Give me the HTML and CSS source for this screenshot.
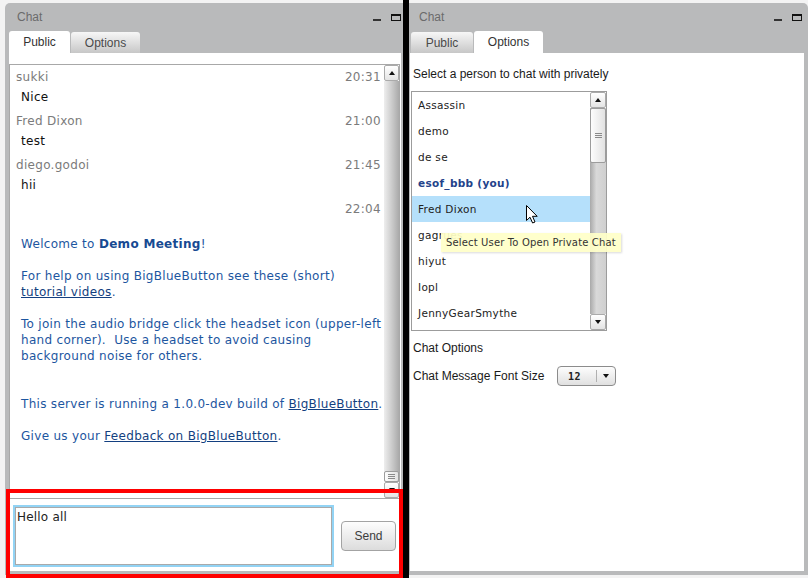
FILE: index.html
```html
<!DOCTYPE html>
<html>
<head>
<meta charset="utf-8">
<link rel="stylesheet" href="styles.css">
</head>
<body>
<div class="screen">
  <section class="win win-left">
    <header class="titlebar">
      <span class="title">Chat</span>
      <span class="ctrls"><i class="ic-min"></i><i class="ic-max"></i></span>
    </header>
    <nav class="tabs">
      <span class="tab active w-public">Public</span>
      <span class="tab w-options">Options</span>
    </nav>
    <div class="body body-left">
      <div class="chatlist">
        <div class="msgs">
          <div class="msg">
            <div class="meta"><span>sukki</span><span>20:31</span></div>
            <div class="text">Nice</div>
          </div>
          <div class="msg">
            <div class="meta"><span>Fred Dixon</span><span>21:00</span></div>
            <div class="text">test</div>
          </div>
          <div class="msg">
            <div class="meta"><span>diego.godoi</span><span>21:45</span></div>
            <div class="text">hii</div>
          </div>
          <div class="msg last">
            <div class="meta"><span></span><span>22:04</span></div>
            <div class="welcome">
              <p>Welcome to <b>Demo Meeting</b>!</p>
              <p>For help on using BigBlueButton see these (short)<br><a>tutorial videos</a>.</p>
              <p class="gap2">To join the audio bridge click the headset icon (upper-left<br>hand corner).&nbsp; Use a headset to avoid causing<br>background noise for others.</p>
              <p>This server is running a 1.0.0-dev build of <a>BigBlueButton</a>.</p>
              <p>Give us your <a>Feedback on BigBlueButton</a>.</p>
            </div>
          </div>
        </div>
        <div class="vscroll">
          <div class="sb-btn"><i class="tri-up"></i></div>
          <div class="sb-track track-left">
            <div class="sb-thumb small"><i class="grip"></i></div>
          </div>
          <div class="sb-btn"><i class="tri-down"></i></div>
        </div>
      </div>
      <div class="compose">
        <div class="input">Hello all</div>
        <button class="send">Send</button>
      </div>
    </div>
  </section>

  <div class="divider"></div>

  <section class="win win-right">
    <header class="titlebar">
      <span class="title">Chat</span>
      <span class="ctrls"><i class="ic-min"></i><i class="ic-max"></i></span>
    </header>
    <nav class="tabs">
      <span class="tab w-public2">Public</span>
      <span class="tab active w-options">Options</span>
    </nav>
    <div class="body body-right">
      <div class="label select-label">Select a person to chat with privately</div>
      <div class="userbox">
        <div class="users">
          <div class="user">Assassin</div>
          <div class="user">demo</div>
          <div class="user">de se</div>
          <div class="user me">esof_bbb (you)</div>
          <div class="user sel">Fred Dixon</div>
          <div class="user">gagrues</div>
          <div class="user">hiyut</div>
          <div class="user">Iopl</div>
          <div class="user">JennyGearSmythe</div>
        </div>
        <div class="vscroll wide">
          <div class="sb-btn"><i class="tri-up"></i></div>
          <div class="sb-track track-right">
            <div class="sb-thumb big"><i class="grip"></i></div>
          </div>
          <div class="sb-btn"><i class="tri-down"></i></div>
        </div>
        <div class="tooltip">Select User To Open Private Chat</div>
        <svg class="cursor" width="13" height="19" viewBox="0 0 13 19">
          <path d="M0.5 0.5 L0.5 15.5 L4 12.2 L6.6 18 L9 17 L6.5 11.3 L11.2 11.3 Z" fill="#fff" stroke="#000" stroke-width="1" stroke-linejoin="miter"/>
        </svg>
      </div>
      <div class="label opt-title">Chat Options</div>
      <div class="opt-row">
        <span class="label opt-label">Chat Message Font Size</span>
        <span class="combo"><span class="val">12</span><span class="arrow"><i class="tri-down"></i></span></span>
      </div>
    </div>
  </section>

  <div class="highlight"></div>
</div>
</body>
</html>
```

FILE: styles.css
```css
* { box-sizing: border-box; }

body {
  margin: 0;
  background: #f3f3f3;
  font-family: "DejaVu Sans", Verdana, sans-serif;
}

.screen {
  position: relative;
  display: flex;
  width: 808px;
  height: 578px;
  overflow: hidden;
}

.win {
  margin-top: 3px;
  height: 572px;
  background: #b9babb;
  display: flex;
  flex-direction: column;
}

.win-left {
  margin-left: 5px;
  width: 398px;
  padding: 0 2px 4px 4px;
  border-radius: 5px 0 0 0;
}

.win-right {
  width: 399px;
  padding: 0 4px 4px 1px;
  border-radius: 0 5px 0 0;
}

.divider {
  width: 6px;
  background: #000;
}

.titlebar {
  height: 28px;
  display: flex;
  align-items: center;
  justify-content: space-between;
  font-family: "Liberation Sans", Arial, sans-serif;
  font-size: 12px;
  color: #6b6b6b;
  padding-left: 8px;
}

.win-right .titlebar {
  padding-left: 9px;
  padding-right: 2px;
}

.ctrls {
  display: flex;
  align-items: flex-end;
  gap: 10px;
  height: 7px;
}

.ic-min {
  width: 8px;
  height: 2px;
  background: #333;
}

.ic-max {
  width: 10px;
  height: 7px;
  border: 1px solid #111;
  border-top-width: 2px;
}

.tabs {
  height: 22px;
  display: flex;
  align-items: flex-end;
  gap: 1px;
}

.win-right .tabs { padding-left: 1px; }

.tab {
  height: 21px;
  display: flex;
  align-items: center;
  justify-content: center;
  font-family: "Liberation Sans", Arial, sans-serif;
  font-size: 12px;
  color: #4a4a4a;
  background: linear-gradient(#f7f7f7, #c7c7c7);
  border-radius: 3px 3px 0 0;
}

.tab.active {
  height: 22px;
  background: #fff;
  color: #333;
}

.w-public { width: 61px; }
.w-public2 { width: 62px; }
.w-options { width: 69px; }

.body {
  flex: 1;
  background: #fff;
  display: flex;
  flex-direction: column;
}

.body-left {
  padding-top: 11px;
  padding-right: 1px;
}

/* chat list */
.chatlist {
  height: 435px;
  border: 1px solid #a8a8a8;
  display: flex;
}

.msgs {
  flex: 1;
  padding: 2px 3px 0 6px;
  font-size: 12px;
  letter-spacing: 0.3px;
  overflow: hidden;
}

.msg { margin-bottom: 4px; }

.meta {
  display: flex;
  justify-content: space-between;
  height: 20px;
  line-height: 20px;
  color: #7b7b7b;
}

.text {
  height: 20px;
  line-height: 20px;
  padding-left: 5px;
  color: #111;
}

.welcome {
  margin-top: 17px;
  padding-left: 5px;
  color: #1d56a0;
  line-height: 16px;
  white-space: nowrap;
}

.welcome p { margin: 0 0 16px; }
.welcome p.gap2 { margin-bottom: 32px; }
.welcome b { color: #174a92; }
.welcome a { text-decoration: underline; color: #133f80; }

/* scrollbars */
.vscroll {
  width: 15px;
  display: flex;
  flex-direction: column;
}

.vscroll.wide { width: 16px; }

.sb-btn {
  height: 16px;
  flex: none;
  display: flex;
  align-items: center;
  justify-content: center;
  background: linear-gradient(#ffffff, #e4e4e4);
  border: 1px solid #aaaaaa;
  border-radius: 2px;
}

.tri-up {
  width: 0;
  height: 0;
  border-left: 3px solid transparent;
  border-right: 3px solid transparent;
  border-bottom: 4px solid #111;
}

.tri-down {
  width: 0;
  height: 0;
  border-left: 3px solid transparent;
  border-right: 3px solid transparent;
  border-top: 4px solid #111;
}

.sb-track {
  flex: 1;
  display: flex;
  flex-direction: column;
}

.track-left {
  justify-content: flex-end;
  background: linear-gradient(to right, #eeeeee, #c6c6c6 60%, #aaaaaa);
}

.track-right {
  justify-content: flex-start;
  background: linear-gradient(to right, #a9a9a9, #d9d9d9 40%, #cfcfcf);
}

.sb-thumb {
  display: flex;
  align-items: center;
  justify-content: center;
  background: linear-gradient(to right, #fdfdfd, #e2e2e2);
  border: 1px solid #9c9c9c;
  border-radius: 2px;
}

.sb-thumb.small { height: 11px; }
.sb-thumb.big { height: 55px; }

.grip {
  width: 7px;
  height: 5px;
  background: repeating-linear-gradient(#8a8a8a 0 1px, transparent 1px 2px);
}

/* compose */
.compose {
  display: flex;
  align-items: center;
  padding: 6px 0 4px 4px;
}

.input {
  margin: 2px;
  width: 317px;
  height: 58px;
  border: 1px solid #a9a9a9;
  box-shadow: 0 0 0 2px #92d3f4;
  padding: 2px 1px;
  font-size: 12px;
  letter-spacing: 0.2px;
  line-height: 14px;
  color: #222;
}

.send {
  margin-left: 7px;
  width: 55px;
  height: 30px;
  border: 1px solid #a3a3a3;
  border-radius: 4px;
  background: linear-gradient(#fdfdfd, #dcdcdc);
  font-family: "Liberation Sans", Arial, sans-serif;
  font-size: 12px;
  color: #3c3c3c;
  padding: 0;
}

/* right panel */
.label {
  font-family: "Liberation Sans", Arial, sans-serif;
  font-size: 12px;
  line-height: 16px;
  color: #1a1a1a;
  padding-left: 3px;
}

.select-label {
  margin-top: 13px;
  margin-bottom: 9px;
}

.userbox {
  position: relative;
  margin-left: 1px;
  width: 196px;
  height: 240px;
  border: 1px solid #9c9c9c;
  display: flex;
}

.users {
  flex: 1;
  font-size: 10.5px;
  letter-spacing: 0.3px;
  color: #222;
}

.user {
  height: 26px;
  line-height: 26px;
  padding-left: 6px;
  white-space: nowrap;
}

.user.me {
  font-weight: bold;
  color: #23428a;
}

.user.sel { background: #b5e0fb; }

.tooltip {
  position: absolute;
  left: 29px;
  top: 141px;
  height: 19px;
  width: 180px;
  padding-left: 5px;
  line-height: 19px;
  font-size: 10px;
  letter-spacing: 0.15px;
  color: #333;
  white-space: nowrap;
  background: rgba(255, 255, 200, 0.93);
  box-shadow: 1px 1px 2px rgba(0, 0, 0, 0.15);
}

.cursor {
  position: absolute;
  left: 114px;
  top: 113px;
}

.opt-title { margin-top: 9px; }

.opt-row {
  margin-top: 10px;
  height: 20px;
  display: flex;
  align-items: center;
}

.opt-label { width: 147px; }

.combo {
  width: 59px;
  height: 20px;
  border: 1px solid #8c8c8c;
  border-radius: 4px;
  background: linear-gradient(#fdfdfd, #e0e0e0);
  display: flex;
  align-items: center;
}

.combo .val {
  width: 38px;
  padding-left: 10px;
  font-family: "DejaVu Sans Mono", monospace;
  font-weight: bold;
  font-size: 10px;
  letter-spacing: 0.5px;
  color: #222;
}

.combo .arrow {
  flex: 1;
  height: 12px;
  border-left: 1px solid #b0b0b0;
  display: flex;
  align-items: center;
  justify-content: center;
}

.highlight {
  position: absolute;
  left: 6px;
  top: 489px;
  width: 397px;
  height: 89px;
  border: 4px solid #ff0000;
}
```
